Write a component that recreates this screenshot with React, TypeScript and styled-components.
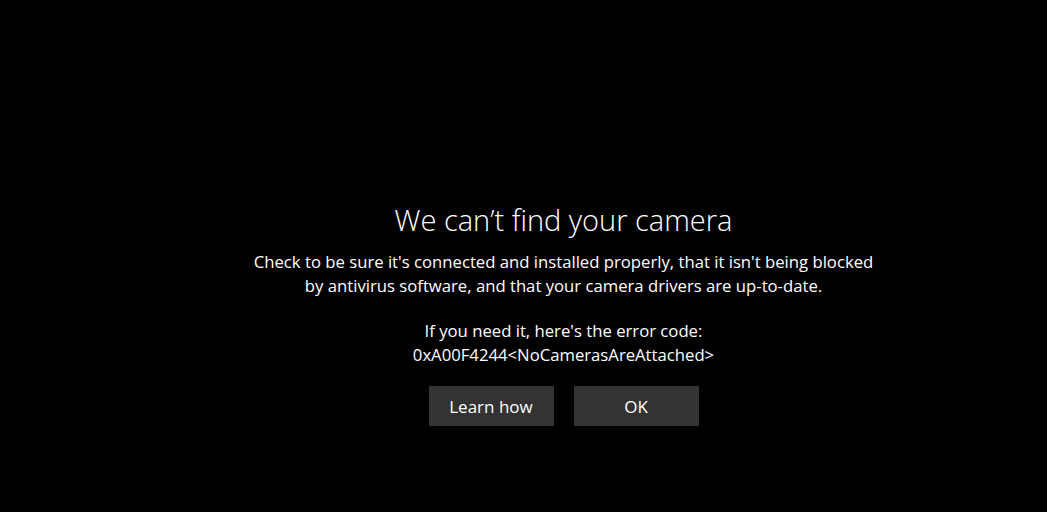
import React from "react";
import styled, { createGlobalStyle } from "styled-components";

const Global = createGlobalStyle`
  html, body { margin: 0; padding: 0; background: #000; }
  body { font-family: "Open Sans", "Noto Sans", sans-serif; color: #fff; }
`;

const Page = styled.div`
  width: 1047px;
  height: 512px;
  background: #000;
  display: flex;
  flex-direction: column;
  align-items: center;
  padding: 201px 0 0 80px;
  box-sizing: border-box;
`;

const Title = styled.h1`
  margin: 0;
  font-size: 29px;
  font-weight: 300;
  line-height: 38px;
  color: #fff;
`;

const Para = styled.p<{ $mt: number }>`
  margin: ${(p) => p.$mt}px 0 0;
  font-size: 16.7px;
  line-height: 23.5px;
  text-align: center;
  color: #fff;
`;

const Buttons = styled.div`
  display: flex;
  gap: 20px;
  margin-top: 20px;
`;

const Button = styled.button`
  width: 125px;
  height: 40px;
  background: #333333;
  border: none;
  color: #fff;
  font-family: inherit;
  font-size: 17px;
  padding: 0;
`;

export default function App() {
  return (
    <>
      <Global />
      <Page>
        <Title>We can’t find your camera</Title>
        <Para $mt={11}>
          Check to be sure it's connected and installed properly, that it isn't being blocked
          <br />
          by antivirus software, and that your camera drivers are up-to-date.
        </Para>
        <Para $mt={22}>
          If you need it, here's the error code:
          <br />
          0xA00F4244&lt;NoCamerasAreAttached&gt;
        </Para>
        <Buttons>
          <Button>Learn how</Button>
          <Button>OK</Button>
        </Buttons>
      </Page>
    </>
  );
}
